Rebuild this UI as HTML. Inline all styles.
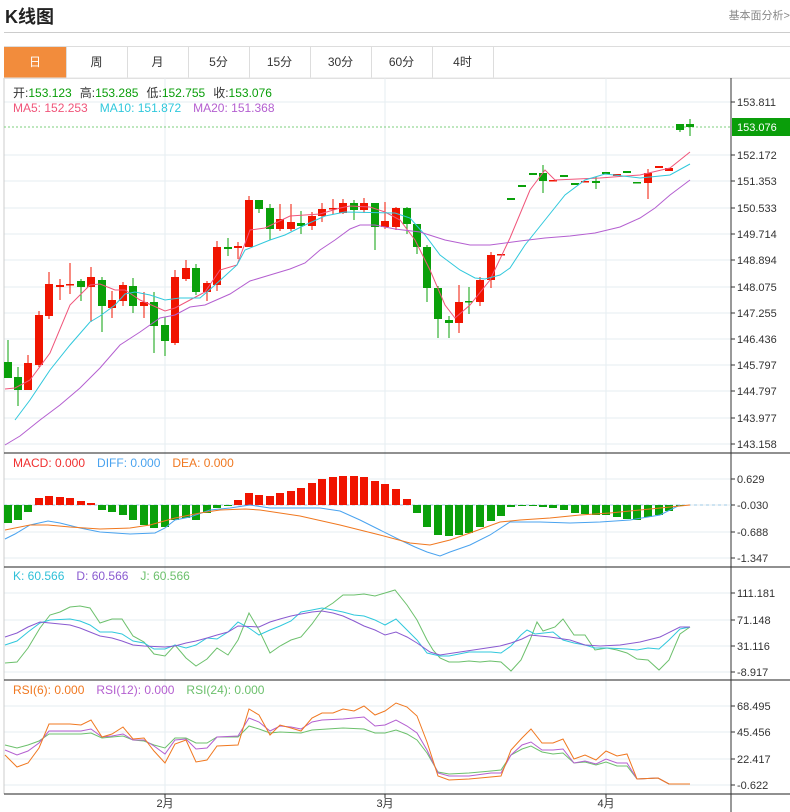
<!DOCTYPE html>
<html><head><meta charset="utf-8">
<style>
body{margin:0;width:790px;height:812px;background:#fff;font-family:"Liberation Sans","Noto Sans CJK SC",sans-serif;overflow:hidden;position:relative}
.t{position:absolute;left:5px;top:3px;font-size:18px;font-weight:bold;color:#222}
.r{position:absolute;right:0;top:7px;font-size:11px;color:#888}
.hl{position:absolute;left:4px;right:0;top:32px;border-top:1px solid #ccc}
.tabs{position:absolute;left:4px;top:46px;height:31px;width:786px;border-top:1px solid #ddd;border-bottom:1px solid #ddd}
.tab{position:absolute;top:0;height:31px;line-height:31px;text-align:center;font-size:12px;color:#333;border-right:1px solid #ddd}
.tab.on{background:#f28c3c;color:#fff}
svg{position:absolute;left:0;top:0}
</style></head><body>
<div class="t">K线图</div><div class="r">基本面分析&gt;</div><div class="hl"></div>
<div class="tabs">
<div class="tab on" style="left:0;width:62px">日</div>
<div class="tab" style="left:62px;width:61px">周</div>
<div class="tab" style="left:123px;width:61px">月</div>
<div class="tab" style="left:184px;width:61px">5分</div>
<div class="tab" style="left:245px;width:61px">15分</div>
<div class="tab" style="left:306px;width:61px">30分</div>
<div class="tab" style="left:367px;width:61px">60分</div>
<div class="tab" style="left:428px;width:61px">4时</div>
</div>
<svg id="s" width="790" height="812" xmlns="http://www.w3.org/2000/svg" font-family="Liberation Sans, Noto Sans CJK SC, sans-serif"></svg>
<script>
var S=document.getElementById('s'),h='';
function L(x1,y1,x2,y2,c,w,d){h+='<line x1="'+x1+'" y1="'+y1+'" x2="'+x2+'" y2="'+y2+'" stroke="'+c+'" stroke-width="'+(w||1)+'"'+(d?' stroke-dasharray="'+d+'"':'')+'/>';}
function T(x,y,t,c,s,a){h+='<text x="'+x+'" y="'+y+'" fill="'+c+'" font-size="'+(s||11)+'"'+(a?' text-anchor="'+a+'"':'')+'>'+t+'</text>';}
function P(pts,c){h+='<polyline fill="none" stroke="'+c+'" stroke-width="1" points="'+pts.map(function(p){return p.join(',')}).join(' ')+'"/>';}
var G='#e6edf2';
[102,155,181,208,234,260,287,313,339,365,391,418,444].forEach(function(y){L(4,y,731,y,G)});
[479,505,532,558].forEach(function(y){L(4,y,731,y,G)});
[593,620,646,672].forEach(function(y){L(4,y,731,y,G)});
[706,732,759,785].forEach(function(y){L(4,y,731,y,G)});
[165,385,606].forEach(function(x){L(x,78,x,794,G)});
L(4,78,4,794,'#ccc');L(4,78,790,78,'#e5e5e5');
[453,567,680,794].forEach(function(y){L(4,y,790,y,'#222')});
L(731,78,731,812,'#333');
var al=[[102,'153.811'],[155,'152.172'],[181,'151.353'],[208,'150.533'],[234,'149.714'],[260,'148.894'],[287,'148.075'],[313,'147.255'],[339,'146.436'],[365,'145.797'],[391,'144.797'],[418,'143.977'],[444,'143.158'],[479,'0.629'],[505,'-0.030'],[532,'-0.688'],[558,'-1.347'],[593,'111.181'],[620,'71.148'],[646,'31.116'],[672,'-8.917'],[706,'68.495'],[732,'45.456'],[759,'22.417'],[785,'-0.622']];
al.forEach(function(a){L(731,a[0],735,a[0],'#333');T(737,a[0]+4,a[1],'#333',11)});
h+='<rect x="732" y="118" width="58" height="18" fill="#0a9e0a"/>';T(737,131,'153.076','#fff',11);
L(4,127,731,127,'#7ccf7c',1,'2,2');
L(4,505,731,505,'#9cc9e4',1,'3,3');
[[165,'2月'],[385,'3月'],[606,'4月']].forEach(function(a){L(a[0],794,a[0],798,'#333');T(a[0],807,a[1],'#333',11,'middle')});
h+='<text x="13" y="97" font-size="12"><tspan fill="#333">开:</tspan><tspan fill="#0a9e0a">153.123</tspan><tspan fill="#333" dx="8">高:</tspan><tspan fill="#0a9e0a">153.285</tspan><tspan fill="#333" dx="8">低:</tspan><tspan fill="#0a9e0a">152.755</tspan><tspan fill="#333" dx="8">收:</tspan><tspan fill="#0a9e0a">153.076</tspan></text>';
h+='<text x="13" y="112" font-size="12"><tspan fill="#f0557a">MA5: 152.253</tspan><tspan fill="#30c8dc" dx="12">MA10: 151.872</tspan><tspan fill="#b45fd0" dx="12">MA20: 151.368</tspan></text>';
h+='<text x="13" y="467" font-size="12"><tspan fill="#f03030">MACD: 0.000</tspan><tspan fill="#4aa3ef" dx="12">DIFF: 0.000</tspan><tspan fill="#f07820" dx="12">DEA: 0.000</tspan></text>';
h+='<text x="13" y="580" font-size="12"><tspan fill="#30c0d8">K: 60.566</tspan><tspan fill="#8a5ad0" dx="12">D: 60.566</tspan><tspan fill="#6cc06c" dx="12">J: 60.566</tspan></text>';
h+='<text x="13" y="694" font-size="12"><tspan fill="#f07820">RSI(6): 0.000</tspan><tspan fill="#b45fd0" dx="12">RSI(12): 0.000</tspan><tspan fill="#6cc06c" dx="12">RSI(24): 0.000</tspan></text>';
var R='#f01400',Gr='#0aa00a';
var cd=[[8,0,362,378,340,378],[18,0,377,390,367,406],[28,1,363,390,355,390],[39,1,315,365,311,367],[49,1,284,316,272,319],[60,1,285,287,279,300],[70,1,284,285,263,294],[81,0,281,287,279,301],[91,1,277,287,267,322],[102,0,280,306,277,332],[112,1,300,308,291,318],[123,1,285,301,282,306],[133,0,286,306,278,313],[144,1,302,306,292,318],[154,0,302,326,292,353],[165,0,325,341,317,356],[175,1,277,343,270,345],[186,1,268,279,260,281],[196,0,268,292,264,295],[207,1,283,292,281,301],[217,1,247,285,241,291],[228,0,247,249,238,256],[238,1,246,248,242,259],[249,1,200,247,196,247],[259,0,200,209,200,213],[270,0,208,229,204,240],[280,1,219,229,204,231],[291,1,222,229,204,231],[301,0,223,226,211,234],[312,1,216,226,212,230],[322,1,209,216,203,222],[333,1,208,209,199,214],[343,1,203,213,199,214],[354,0,203,210,200,220],[364,1,203,210,198,213],[375,0,203,227,203,250],[385,1,221,227,202,229],[396,1,208,227,207,230],[407,0,208,224,207,234],[417,0,224,247,224,254],[427,0,247,288,245,302],[438,0,288,319,286,338],[449,0,320,323,316,338],[459,1,302,323,285,333],[469,0,301,302,287,314],[480,1,280,302,277,306],[491,1,255,280,252,288],[501,1,254,255,254,255],[511,0,198,200,198,200],[522,0,185,187,185,187],[533,0,173,175,173,175],[543,0,173,181,165,193],[553,1,180,181,180,181],[564,0,175,177,175,177],[575,0,183,185,183,185],[585,1,181,182,181,182],[596,0,181,183,177,189],[606,0,172,174,172,174],[617,1,174,176,174,176],[627,0,171,173,171,173],[637,0,182,183,182,183],[648,1,173,183,169,199],[659,1,166,168,166,168],[669,1,168,171,168,171],[680,0,124,130,124,132],[690,0,124,127,119,136]];
cd.forEach(function(c){var col=c[1]?R:Gr;L(c[0],c[4],c[0],c[5],col);var hh=Math.max(c[3]-c[2],1.5);h+='<rect x="'+(c[0]-4)+'" y="'+c[2]+'" width="8" height="'+hh+'" fill="'+col+'"/>';});
P([[5,389],[15,388],[30,380],[50,353],[70,305],[90,285],[100,284],[115,290],[125,290],[140,300],[165,311],[175,308],[190,300],[205,292],[220,270],[237,265],[250,230],[265,228],[290,216],[305,215],[320,214],[340,208],[350,206],[370,207],[385,212],[400,220],[415,240],[430,270],[445,305],[455,318],[470,305],[490,280],[510,238],[530,190],[545,170],[555,180],[600,178],[640,175],[670,168],[690,152]],'#f0557a');
P([[15,420],[30,400],[50,370],[70,345],[90,322],[100,316],[115,305],[125,294],[135,292],[150,295],[165,300],[180,298],[200,298],[215,285],[237,265],[245,250],[270,240],[285,235],[305,225],[325,216],[345,212],[395,213],[410,218],[425,235],[440,255],[460,270],[475,278],[485,279],[500,275],[510,268],[525,245],[545,220],[565,195],[585,180],[605,174],[640,178],[670,175],[690,164]],'#30c8dc');
P([[5,445],[20,436],[40,420],[60,405],[80,388],[100,368],[120,345],[140,332],[160,318],[175,315],[190,307],[205,305],[230,294],[250,281],[270,275],[290,269],[305,263],[320,250],[335,240],[350,229],[360,225],[375,225],[395,229],[420,232],[445,240],[470,245],[490,245],[520,241],[545,238],[570,236],[595,233],[620,227],[640,218],[655,208],[670,195],[690,180]],'#b45fd0');
var mb=[[8,523],[18,520],[28,512],[39,498],[49,496],[60,497],[70,498],[81,501],[91,503],[102,510],[112,512],[123,515],[133,520],[144,525],[154,528],[165,527],[175,520],[186,518],[196,520],[207,513],[217,508],[228,506],[238,500],[249,493],[259,495],[270,496],[280,493],[291,491],[301,488],[312,483],[322,479],[333,477],[343,476],[354,476],[364,477],[375,481],[385,484],[396,489],[407,499],[417,513],[427,527],[438,535],[449,536],[459,535],[469,533],[480,527],[491,521],[501,516],[511,507],[522,506],[533,506],[543,507],[553,508],[564,510],[575,513],[585,514],[596,515],[606,515],[617,517],[627,519],[637,520],[648,517],[659,515],[669,511],[680,506]];
mb.forEach(function(b){var y=b[1];var col=y<505?R:Gr;var t=Math.min(y,505),hh=Math.abs(y-505);h+='<rect x="'+(b[0]-4)+'" y="'+t+'" width="8" height="'+Math.max(hh,1)+'" fill="'+col+'"/>';});
P([[5,539],[15,534],[30,525],[48,521],[60,523],[80,528],[100,532],[130,534],[155,533],[165,528],[175,520],[190,517],[210,510],[230,508],[250,505],[270,508],[320,508],[340,511],[360,520],[380,530],[400,540],[415,547],[427,552],[440,556],[450,552],[470,545],[490,535],[510,522],[540,522],[570,523],[600,522],[630,520],[660,515],[680,505]],'#4aa3ef');
P([[5,530],[30,525],[48,525],[70,527],[100,529],[130,528],[150,525],[175,518],[200,513],[220,510],[245,509],[260,510],[300,516],[340,525],[380,535],[410,543],[430,545],[450,540],[470,533],[500,522],[520,520],[550,518],[580,515],[610,513],[640,510],[660,508],[690,505]],'#f07820');
P([[5,663],[17,662],[28,648],[40,628],[50,615],[60,612],[70,607],[80,606],[90,608],[100,623],[112,619],[122,619],[133,636],[144,642],[154,654],[165,656],[175,645],[186,658],[196,666],[207,659],[217,648],[228,655],[238,640],[249,613],[259,630],[270,653],[280,646],[291,640],[301,637],[312,624],[322,610],[333,603],[343,595],[354,595],[364,594],[375,596],[385,593],[395,590],[407,605],[417,620],[427,640],[433,650],[440,658],[449,662],[459,662],[469,661],[480,662],[490,661],[501,662],[511,671],[521,660],[530,640],[537,622],[543,631],[555,627],[563,619],[574,635],[585,635],[595,650],[607,648],[617,650],[627,653],[637,659],[648,660],[659,670],[669,660],[680,634],[690,627]],'#6cc06c');
P([[5,645],[17,641],[28,632],[40,623],[50,620],[70,619],[80,621],[90,625],[100,632],[112,632],[122,634],[133,641],[144,643],[154,649],[165,649],[175,645],[186,648],[196,645],[207,638],[217,639],[228,632],[238,622],[249,628],[259,635],[270,630],[280,626],[291,621],[301,612],[312,610],[322,608],[333,610],[343,612],[354,615],[364,616],[375,620],[385,625],[396,619],[407,630],[417,640],[427,653],[440,656],[449,656],[459,654],[469,652],[491,652],[501,653],[511,646],[521,635],[527,630],[535,634],[553,632],[563,640],[574,643],[585,645],[595,648],[607,648],[627,649],[637,650],[648,648],[659,649],[669,640],[680,629],[690,627]],'#30c8dc');
P([[5,637],[17,633],[28,627],[40,622],[50,623],[70,625],[80,628],[90,632],[100,636],[112,638],[122,641],[133,645],[144,646],[165,647],[175,646],[186,643],[196,641],[207,638],[217,635],[228,632],[238,626],[259,627],[270,622],[280,619],[291,616],[301,614],[312,612],[322,611],[333,613],[343,616],[354,621],[364,626],[375,630],[385,635],[396,632],[407,637],[417,643],[430,652],[440,655],[460,652],[480,649],[500,646],[511,643],[522,639],[530,635],[550,637],[570,640],[585,645],[600,646],[620,645],[640,642],[660,637],[680,627],[690,627]],'#8a5ad0');
P([[5,745],[17,748],[28,745],[39,741],[49,734],[70,734],[81,734],[91,733],[102,738],[112,737],[123,736],[133,740],[144,741],[154,745],[165,748],[175,738],[186,738],[196,743],[207,743],[217,737],[238,737],[249,726],[259,729],[270,733],[280,732],[301,733],[312,730],[343,728],[364,729],[375,733],[385,733],[396,730],[407,734],[417,740],[427,753],[438,772],[449,774],[469,773],[491,771],[501,770],[511,755],[522,749],[531,746],[542,752],[553,754],[563,753],[574,763],[585,762],[596,765],[606,762],[617,766],[627,766],[637,779],[658,778],[669,784],[690,784]],'#6cc06c');
P([[5,750],[17,755],[28,751],[39,743],[49,731],[70,731],[81,731],[91,729],[102,737],[112,736],[123,734],[133,740],[144,740],[154,746],[165,754],[175,740],[186,739],[196,749],[207,748],[217,737],[238,736],[249,718],[259,722],[270,731],[280,726],[291,727],[301,729],[312,722],[322,720],[343,719],[364,717],[375,726],[385,725],[396,720],[407,726],[417,733],[427,750],[438,773],[449,776],[469,776],[491,773],[501,773],[511,755],[522,745],[531,742],[542,750],[553,750],[563,749],[574,763],[585,761],[596,764],[606,759],[617,763],[627,763],[637,779],[658,778],[669,784],[690,784]],'#b45fd0');
P([[5,755],[17,767],[28,763],[39,748],[49,724],[70,724],[81,725],[91,720],[102,737],[112,734],[123,727],[133,739],[144,738],[154,751],[165,763],[175,744],[186,740],[196,762],[207,760],[217,746],[238,745],[249,709],[259,715],[270,735],[280,725],[291,728],[301,731],[312,718],[322,713],[333,713],[343,709],[354,711],[364,706],[375,715],[385,711],[396,703],[407,707],[417,716],[427,742],[438,776],[449,780],[469,779],[480,778],[501,776],[511,750],[522,738],[531,729],[542,743],[553,743],[563,739],[574,759],[585,755],[596,760],[606,751],[617,756],[627,754],[637,779],[658,778],[669,784],[690,784]],'#f07820');
S.innerHTML=h;
</script>
</body></html>
